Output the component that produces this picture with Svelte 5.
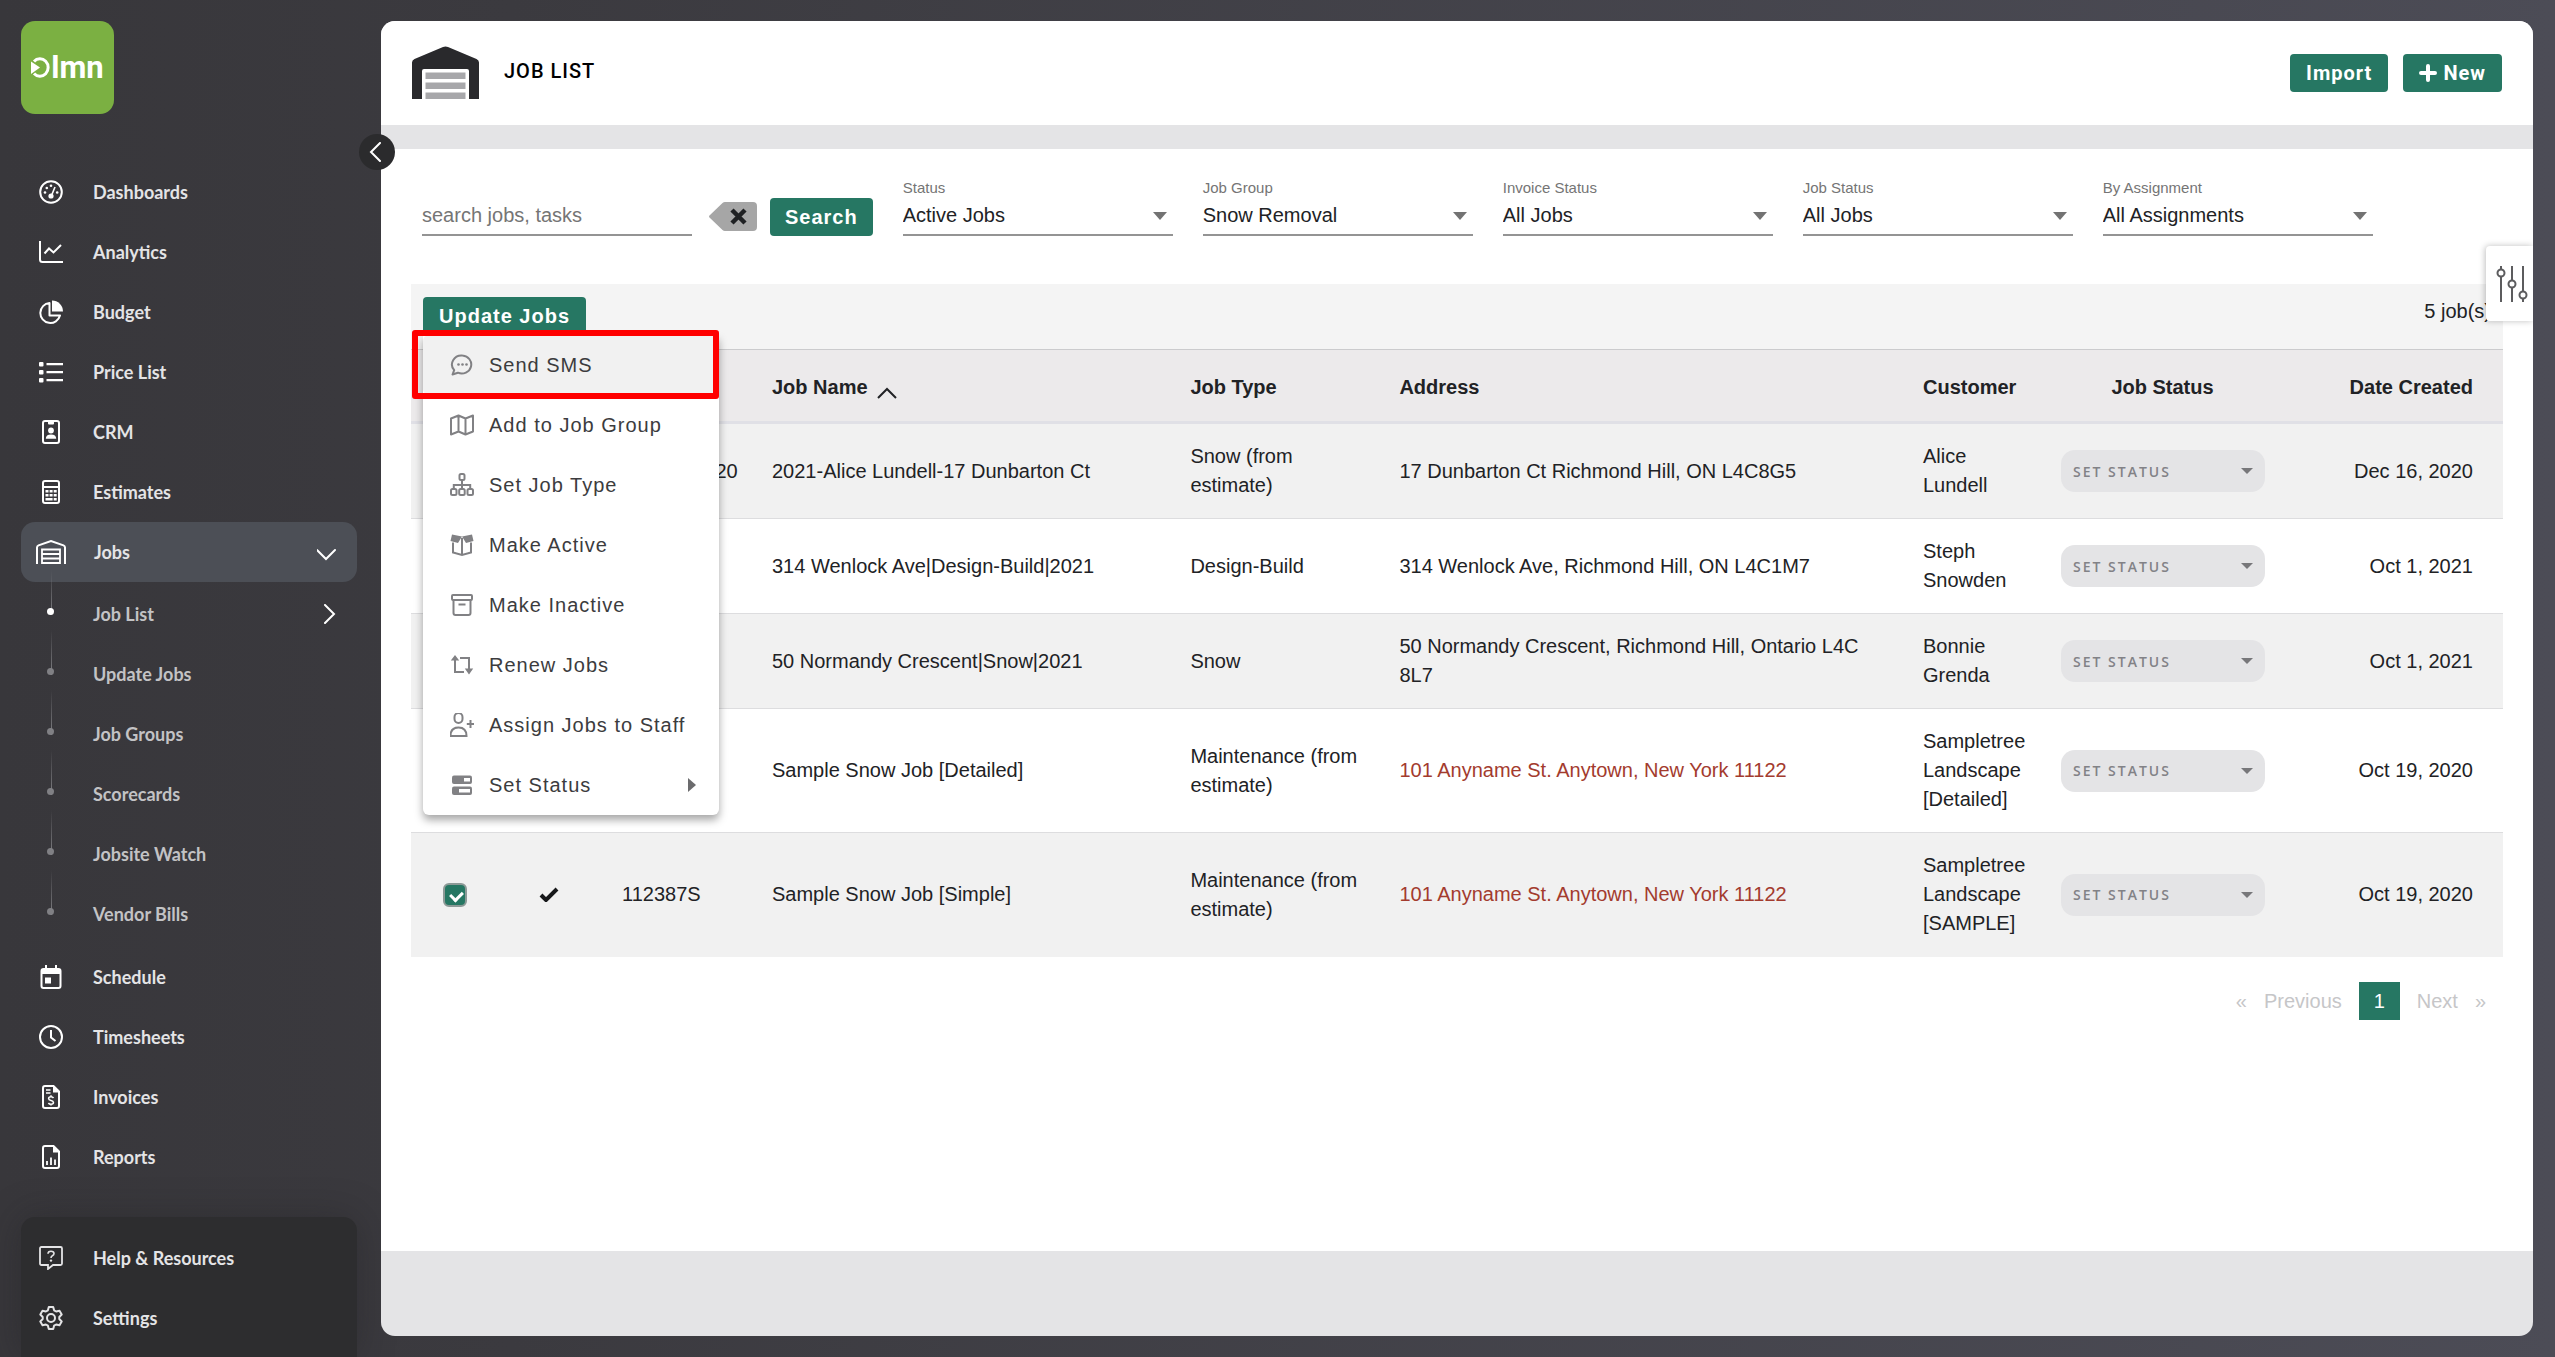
<script>
  const topNav = ['Dashboards', 'Analytics', 'Budget', 'Price List', 'CRM', 'Estimates'];
  const subNav = ['Job List', 'Update Jobs', 'Job Groups', 'Scorecards', 'Jobsite Watch', 'Vendor Bills'];
  const lowerNav = ['Schedule', 'Timesheets', 'Invoices', 'Reports'];
  const helpNav = ['Help & Resources', 'Settings'];
  const filters = [
    { id: 'status', label: 'Status', value: 'Active Jobs' },
    { id: 'group', label: 'Job Group', value: 'Snow Removal' },
    { id: 'invoice', label: 'Invoice Status', value: 'All Jobs' },
    { id: 'jobstatus', label: 'Job Status', value: 'All Jobs' },
    { id: 'assignment', label: 'By Assignment', value: 'All Assignments' }
  ];
  const actions = ['Send SMS', 'Add to Job Group', 'Set Job Type', 'Make Active', 'Make Inactive', 'Renew Jobs', 'Assign Jobs to Staff', 'Set Status'];
  const jobs = [
    { number: 'DEC16-2020', name: '2021-Alice Lundell-17 Dunbarton Ct', type: 'Snow (from estimate)', address: '17 Dunbarton Ct Richmond Hill, ON L4C8G5', customer: 'Alice Lundell', date: 'Dec 16, 2020' },
    { number: '112384S', name: '314 Wenlock Ave|Design-Build|2021', type: 'Design-Build', address: '314 Wenlock Ave, Richmond Hill, ON L4C1M7', customer: 'Steph Snowden', date: 'Oct 1, 2021' },
    { number: '112385S', name: '50 Normandy Crescent|Snow|2021', type: 'Snow', address: '50 Normandy Crescent, Richmond Hill, Ontario L4C 8L7', customer: 'Bonnie Grenda', date: 'Oct 1, 2021' },
    { number: '112386S', name: 'Sample Snow Job [Detailed]', type: 'Maintenance (from estimate)', address: '101 Anyname St. Anytown, New York 11122', customer: 'Sampletree Landscape [Detailed]', date: 'Oct 19, 2020', flagged: true },
    { number: '112387S', name: 'Sample Snow Job [Simple]', type: 'Maintenance (from estimate)', address: '101 Anyname St. Anytown, New York 11122', customer: 'Sampletree Landscape [SAMPLE]', date: 'Oct 19, 2020', flagged: true }
  ];
</script>

{#snippet icon(name)}
  <svg class="icon" viewBox="0 0 24 24" aria-hidden="true">
    {#if name === 'Dashboards'}
      <circle cx="12" cy="12" r="10.8" stroke-width="2" />
      <path d="M12.5 15.5 16 7" stroke-width="1.6" />
      <circle class="fill" cx="12" cy="16" r="2.6" />
      <g class="fill"><circle cx="6" cy="12.5" r="1.3" /><circle cx="7.8" cy="8" r="1.3" /><circle cx="12" cy="5.8" r="1.3" /><circle cx="18.2" cy="12.5" r="1.3" /></g>
    {:else if name === 'Analytics'}
      <path d="M1 1v18.500q0 2.500 2.500 2.500H24" stroke-width="2" />
      <path d="m5.500 13.500 4.500-5 4.500 4 7.500-7.500" stroke-width="2" />
    {:else if name === 'Budget'}
      <path d="M10.500 3A10 10 0 1 0 21 15.500H10.500Z" stroke-width="2" stroke-linejoin="round" />
      <path class="fill" d="M13 .5A11 11 0 0 1 24 11.500H13Z" />
    {:else if name === 'Price List'}
      <g class="fill"><rect x="0" y="2" width="4.500" height="4.500" rx="1" /><rect x="0" y="10" width="4.500" height="4.500" rx="1" /><rect x="0" y="18" width="4.500" height="4.500" rx="1" /></g>
      <path d="M7.500 4.200H24M7.500 12.200H24M7.500 20.200H24" stroke-width="2.200" />
    {:else if name === 'CRM'}
      <rect x="4" y="1" width="16" height="22" rx="2" stroke-width="2" />
      <g class="fill"><rect x="9" y="1" width="6" height="3.500" rx="1" /><circle cx="12" cy="10.500" r="2.900" /><path d="M6.800 18.800q0-4.300 5.200-4.300t5.200 4.300Z" /></g>
    {:else if name === 'Estimates'}
      <rect x="4" y="1" width="16" height="22" rx="2" stroke-width="2" />
      <path d="M4 7h16" stroke-width="2" />
      <path class="fill" d="M6.500 10h3v2.600h-3zM10.600 10h3v2.600h-3zM14.700 10h3v2.600h-3zM6.500 14h3v2.600h-3zM10.600 14h3v2.600h-3zM14.700 14h3v2.600h-3zM6.500 18h7.100v2.400H6.500zM14.700 18h3v2.400h-3z" />
    {:else if name === 'Schedule'}
      <rect x="2.500" y="4" width="19" height="19" rx="2" stroke-width="2" />
      <path class="fill" d="M2 4h20v5H2zM6 0h2v5H6zM16 0h2v5h-2zM6 12.500h6v6H6z" />
    {:else if name === 'Timesheets'}
      <circle cx="12" cy="12" r="11" stroke-width="2" />
      <path d="M12 5v7.500l4.500 3.500" stroke-width="2" />
    {:else if name === 'Invoices'}
      <path d="M14.500 1H6Q4 1 4 3v18q0 2 2 2h12q2 0 2-2V6.500Z" stroke-width="2" />
      <path class="fill" d="M14 1v6.500h6.500Z" />
      <path d="M7 5h4.500M7 8h4.500" stroke-width="1.500" />
      <path d="M14.500 13q-.8-1.300-2.500-1.300-2.400 0-2.400 1.800 0 1.500 2.400 2t2.500 2.100q0 1.700-2.500 1.700-1.800 0-2.600-1.300M12 10.300v1.500M12 19v1.500" stroke-width="1.500" />
    {:else if name === 'Reports'}
      <path d="M14.500 1H6Q4 1 4 3v18q0 2 2 2h12q2 0 2-2V6.500Z" stroke-width="2" />
      <path class="fill" d="M14 1v6.500h6.500Z" />
      <path d="M8 16v4M12 12.500V20M16 14.500V20" stroke-width="1.800" />
    {:else if name === 'Help & Resources'}
      <path d="M2.500 1h19Q23 1 23 2.500v15q0 1.500-1.500 1.500H14l-5 4v-4H2.500Q1 19 1 17.500v-15Q1 1 2.500 1Z" stroke-width="1.800" />
      <path d="M9 7.800q0-2.600 3-2.600t3 2.300q0 1.400-1.600 2.200-1.400.7-1.400 2.200" stroke-width="1.600" />
      <circle class="fill" cx="12" cy="14.600" r="1.200" />
    {:else if name === 'Settings'}
      <circle cx="12" cy="12" r="4" stroke-width="2" />
      <path d="M9.800 1h4.400l.9 3.300 2 1.200 3.400-.8 2.200 3.800-2.400 2.500v2l2.400 2.500-2.200 3.800-3.400-.8-2 1.200-.9 3.300H9.800l-.9-3.300-2-1.200-3.400.8-2.200-3.800L3.700 13v-2L1.300 8.500l2.200-3.800 3.400.8 2-1.200Z" stroke-width="2" stroke-linejoin="round" />
    {:else if name === 'Send SMS'}
      <path d="M12.500 2.500a9.500 9 0 1 1-4.600 17.200L2.500 21.500l1.700-4.300A9.500 9 0 0 1 12.500 2.500Z" stroke-linejoin="round" />
      <g class="fill"><circle cx="8.500" cy="11.500" r="1.300" /><circle cx="12.500" cy="11.500" r="1.300" /><circle cx="16.500" cy="11.500" r="1.300" /></g>
    {:else if name === 'Add to Job Group'}
      <path d="M1 5.500 8.500 2.500l7 3L23 2.500v16l-7.500 3-7-3-7.500 3ZM8.500 2.500v16M15.500 5.500v16" stroke-linejoin="round" />
    {:else if name === 'Set Job Type'}
      <rect x="9.500" y="1" width="5" height="6" rx="1.500" /><rect x="1" y="16" width="5.500" height="6" rx="1.500" /><rect x="9.200" y="16" width="5.500" height="6" rx="1.500" /><rect x="17.500" y="16" width="5.500" height="6" rx="1.500" />
      <path d="M12 7v9M3.800 16v-4h16.400v4" />
    {:else if name === 'Make Active'}
      <path class="fill" d="M2 1.500 12 3.500 8 10 .5 8ZM22 1.500 12 3.500l4 6.500 7.500-2Z" />
      <path d="M3 9.500v10l9 2.500 9-2.500v-10M12 5v17" />
    {:else if name === 'Make Inactive'}
      <rect x="2" y="2" width="20" height="5" rx="1" /><path d="M3.500 7v13q0 2 2 2h13q2 0 2-2V7M8.500 11.500h7" />
    {:else if name === 'Renew Jobs'}
      <path d="M5 6v13h9M10 5h9v12" />
      <path class="fill" d="M5 2 .8 7.500h8.400ZM19 21.500l-4.200-6h8.400Z" />
    {:else if name === 'Assign Jobs to Staff'}
      <rect x="4.500" y="0" width="8" height="10" rx="4" /><path d="M.5 23q0-8.500 8-8.500t8 8.500ZM20.500 7v8M16.800 11h7.400" />
    {:else if name === 'Set Status'}
      <rect class="fill" x="2" y="2.500" width="20" height="8.500" rx="2" /><rect class="fill" x="2" y="13.500" width="20" height="8.500" rx="2" />
      <path class="notch" d="M14 5h6v3.500h-6zM9 16h11v3.500H9z" />
    {/if}
  </svg>
{/snippet}

<div class="shell">
  <aside class="sidebar">
    <a class="logo" href="#home" aria-label="LMN home">
      <svg viewBox="0 0 20 21" aria-hidden="true">
        <path d="M3 4.500A8.200 8.700 0 1 1 3 16.500" />
        <path class="wedge" d="M0 4.500v12.500l9-6.500Z" />
      </svg>
      <span>lmn</span>
    </a>

    <nav class="menu" aria-label="Main">
      {#each topNav as item}
        <a class="nav-item" href="#nav">{@render icon(item)}<span>{item}</span></a>
      {/each}
      <a class="nav-item current" href="#jobs">
        <svg class="icon garage" viewBox="0 0 30 24" aria-hidden="true">
          <path d="M1 24V7.500Q1 6 2.500 5.400L15 1l12.500 4.400Q29 6 29 7.500V24" stroke-width="2" />
          <path d="M6 24V9.500h18V24M6 14h18M6 18.500h18M6 23h18" stroke-width="1.800" />
        </svg>
        <span>Jobs</span>
        <svg class="chev" viewBox="0 0 20 20" aria-hidden="true"><path d="m0 8 9 9 9-9" /></svg>
      </a>
      <div class="sub">
        {#each subNav as item, i}
          <a class="nav-item" class:on={i === 0} href="#sub">
            <span class="rail"></span><span>{item}</span>
            {#if i === 0}<svg class="chev" viewBox="0 0 20 20" aria-hidden="true"><path d="m8 1 9 9-9 9" /></svg>{/if}
          </a>
        {/each}
      </div>
      {#each lowerNav as item}
        <a class="nav-item" href="#nav">{@render icon(item)}<span>{item}</span></a>
      {/each}
    </nav>

    <nav class="help" aria-label="Support">
      {#each helpNav as item}
        <a class="nav-item" href="#help">{@render icon(item)}<span>{item}</span></a>
      {/each}
    </nav>
  </aside>

  <main class="panel">
    <button class="collapse" aria-label="Collapse sidebar">
      <svg viewBox="0 0 20 20" aria-hidden="true"><path d="M13 1 4 10l9 9" /></svg>
    </button>
    <header class="head">
      <div class="title">
        <svg class="head-icon" viewBox="0 0 67 53" aria-hidden="true">
          <path fill="#29292c" d="M0 53V16.500q0-2.500 2.500-3.500L31 1q2.500-1 5 0l28.500 12q2.500 1 2.500 3.500V53H57V25q0-2-2-2H12q-2 0-2 2v28Z" />
          <path fill="#a7a7aa" d="M13.500 26.500h40v6.500h-40zM13.500 36.500h40V43h-40zM13.500 46.500h40V53h-40z" />
        </svg>
        <h1>JOB LIST</h1>
      </div>
      <div class="head-actions">
        <button class="btn alt">Import</button>
        <button class="btn alt"><svg class="plus" viewBox="0 0 18 18" aria-hidden="true"><path d="M9 2v14M2 9h14" /></svg>New</button>
      </div>
    </header>

    <section class="content">
      <form class="filters">
        <input class="search" type="text" placeholder="search jobs, tasks" aria-label="Search jobs, tasks" />
        <button class="clear" type="button" aria-label="Clear search">
          <svg viewBox="0 0 48 29" aria-hidden="true">
            <path fill="#a6a6a6" d="M13.500 1Q14.500 0 16 0h28q4 0 4 4v21q0 4-4 4H16q-1.500 0-2.500-1L1 16q-2-1.500 0-3Z" />
            <path d="m23 8 13 13M36 8 23 21" stroke="#1f2123" stroke-width="4.500" />
          </svg>
        </button>
        <button class="btn" type="button">Search</button>
        {#each filters as f}
          <div class="field">
            <label for={f.id}>{f.label}</label>
            <div class="select">
              <select id={f.id}><option>{f.value}</option></select>
              <svg viewBox="0 0 14 8" aria-hidden="true"><path d="M0 0h14L7 8Z" /></svg>
            </div>
          </div>
        {/each}
      </form>

      <div class="toolbar">
        <div class="dropdown">
          <button class="btn">Update Jobs</button>
          <div class="actions" role="menu">
            {#each actions as a, i}
              <button class="action" class:hover={i === 0} role="menuitem">
                {@render icon(a)}<span>{a}</span>
                {#if a === 'Set Status'}<svg class="more" viewBox="0 0 8 14" aria-hidden="true"><path d="M0 0v14l8-7Z" /></svg>{/if}
              </button>
            {/each}
            <div class="marker"></div>
          </div>
        </div>
        <span class="count">5 job(s)</span>
      </div>

      <table>
        <colgroup>
          <col class="c-check" /><col class="c-active" /><col class="c-number" /><col class="c-name" /><col class="c-type" /><col /><col class="c-customer" /><col class="c-status" /><col class="c-date" />
        </colgroup>
        <thead>
          <tr>
            <th></th><th></th><th></th>
            <th>Job Name<svg class="sort" viewBox="0 0 20 12" aria-hidden="true"><path d="m1 11 9-9 9 9" /></svg></th>
            <th>Job Type</th><th>Address</th><th>Customer</th><th class="mid">Job Status</th><th class="end">Date Created</th>
          </tr>
        </thead>
        <tbody>
          {#each jobs as job}
            <tr>
              <td class="icon-cell"><input type="checkbox" checked aria-label="Select {job.name}" /></td>
              <td class="icon-cell"><svg class="tick" viewBox="0 0 20 15" aria-label="Active"><path d="m2 8 5 5L18 2" /></svg></td>
              <td>{job.number}</td>
              <td>{job.name}</td>
              <td>{job.type}</td>
              <td class:flagged={job.flagged}>{job.address}</td>
              <td>{job.customer}</td>
              <td>
                <div class="pill">
                  <select aria-label="Status of {job.name}"><option>SET STATUS</option></select>
                  <svg viewBox="0 0 12 6" aria-hidden="true"><path d="M0 0h12L6 6Z" /></svg>
                </div>
              </td>
              <td class="end">{job.date}</td>
            </tr>
          {/each}
        </tbody>
      </table>

      <nav class="pages" aria-label="Pagination">
        <a href="#first">«</a><a href="#prev">Previous</a><a class="page" href="#1">1</a><a href="#next">Next</a><a href="#last">»</a>
      </nav>

      <button class="drawer" aria-label="Table options">
        <svg viewBox="0 0 32 36" aria-hidden="true">
          <path d="M5 0v3M5 11v25M16 0v14M16 22v14M27 0v25M27 33v3" />
          <circle cx="5" cy="7" r="3.500" /><circle cx="16" cy="18" r="3.500" /><circle cx="27" cy="29" r="3.500" />
        </svg>
      </button>
    </section>
  </main>
</div>

<style>
  :global(body) { margin: 0; }
  * { box-sizing: border-box; }
  a { color: inherit; text-decoration: none; }
  button, input, select { font: inherit; color: inherit; letter-spacing: inherit; }
  button { border: 0; padding: 0; cursor: pointer; }
  svg { display: block; flex: none; fill: none; stroke: currentColor; }

  .shell {
    display: flex;
    min-height: 100vh;
    padding-right: 22px;
    background: linear-gradient(90deg, #38373b 0%, #3b3a3f 20%, #4c4c56 100%);
    font-family: "Liberation Sans", Arial, sans-serif;
    font-size: 20px;
    line-height: 29px;
    color: #212225;
  }

  .sidebar {
    display: flex;
    flex-direction: column;
    flex: none;
    width: 381px;
    padding: 21px 24px 0 21px;
    font-family: Lato, sans-serif;
    font-size: 18px;
    font-weight: 700;
    color: #e4e4e6;
  }
  .logo {
    display: flex;
    align-items: center;
    justify-content: center;
    width: 93px;
    height: 93px;
    border-radius: 14px;
    background: #7bb042;
    color: #fff;
    font-family: Roboto, sans-serif;
    font-size: 31px;
    line-height: 30px;
  }
  .logo svg { width: 20px; height: 21px; stroke-width: 3; }
  .logo .wedge { fill: #fff; stroke: none; }
  .menu { margin-top: 48px; }
  .nav-item {
    display: flex;
    align-items: center;
    gap: 30px;
    height: 60px;
    padding: 0 20px 0 18px;
    border-radius: 14px;
  }
  .icon { width: 24px; height: 24px; color: #fff; }
  .icon .fill { fill: currentColor; stroke: none; }
  .icon .notch { fill: #fff; stroke: none; }
  .current { gap: 28px; padding-left: 15px; background: #4c4f56; }
  .garage { width: 30px; }
  .chev { width: 20px; height: 20px; margin-left: auto; color: #fff; stroke-width: 2; stroke-linecap: round; }
  .sub { margin: 2px 0 3px; color: #c3c3c5; }
  .rail {
    position: relative;
    align-self: flex-start;
    width: 24px;
    height: 45px;
    margin-top: -14px;
    background: linear-gradient(transparent, #808084) center top / 1px 100% no-repeat;
  }
  .rail::after {
    content: "";
    position: absolute;
    left: 8px;
    bottom: 0;
    width: 7px;
    height: 7px;
    border-radius: 50%;
    background: #808084;
  }
  .on .rail::after { background: #fff; }
  .help {
    margin-top: auto;
    padding: 11px 0 9px;
    border-radius: 14px 14px 0 0;
    background: #2d2d2f;
    box-shadow: 0 0 36px rgba(30, 30, 32, 0.35);
  }
  .help .icon { color: #e4e4e6; }

  .panel {
    position: relative;
    display: flex;
    flex-direction: column;
    flex: 1;
    min-width: 0;
    margin: 21px 0;
    padding-bottom: 85px;
    border-radius: 14px;
    background: #e4e4e6;
  }
  .collapse {
    position: absolute;
    z-index: 2;
    top: 113px;
    left: -22px;
    display: grid;
    place-items: center;
    width: 36px;
    height: 36px;
    border-radius: 50%;
    background: #2b2b2d;
    color: #fff;
  }
  .collapse svg { width: 20px; height: 20px; stroke-width: 2; stroke-linecap: round; }
  .head {
    display: flex;
    align-items: center;
    justify-content: space-between;
    height: 104px;
    padding: 0 31px;
    border-radius: 14px 14px 0 0;
    background: #fff;
  }
  .title { display: flex; gap: 25px; padding-bottom: 2px; }
  .head-icon { width: 67px; height: 53px; stroke: none; }
  h1 {
    margin: 0;
    font-family: Roboto, sans-serif;
    font-size: 20px;
    font-weight: 500;
    letter-spacing: 1px;
    line-height: 50px;
    color: #000;
  }
  .head-actions { display: flex; gap: 15px; }
  .btn {
    display: flex;
    align-items: center;
    height: 38px;
    padding: 0 15px;
    border-radius: 4px;
    background: #267763;
    color: #fff;
    font-weight: 700;
    letter-spacing: 1px;
  }
  .alt { font-family: Roboto, sans-serif; }
  .dropdown .btn, .alt { padding: 0 16px; }
  .plus { width: 18px; height: 18px; margin-right: 6px; stroke-width: 4; stroke-linecap: round; }

  .content {
    position: relative;
    flex: 1;
    margin-top: 24px;
    padding: 25px 30px 0;
    background: #fff;
  }
  .filters { display: flex; align-items: flex-end; gap: 30px; height: 62px; padding-left: 11px; }
  .search {
    width: 270px;
    height: 41px;
    padding: 2px 0 0;
    border: 0;
    border-bottom: 2px solid #949494;
    outline: 0;
    background: none;
  }
  .search::placeholder { color: #757575; opacity: 1; }
  .clear { margin: 0 -17px 5px -13px; background: none; }
  .clear svg { width: 48px; height: 29px; stroke: none; }
  .field { flex: 0 1 270px; }
  .field label { display: block; font-size: 15px; line-height: 19px; color: #757575; }
  .select { display: flex; align-items: center; height: 39px; border-bottom: 2px solid #949494; }
  select { flex: 1; min-width: 0; padding: 0; border: 0; outline: 0; background: none; appearance: none; }
  .select svg { width: 14px; height: 8px; margin: 0 6px 0 -20px; fill: #737373; stroke: none; }

  .toolbar {
    display: flex;
    justify-content: space-between;
    height: 66px;
    margin-top: 48px;
    padding: 13px 12px 0;
    border-bottom: 1px solid #cbcbcd;
    background: #f4f4f4;
  }
  .dropdown { position: relative; }
  .actions {
    position: absolute;
    z-index: 3;
    top: 38px;
    left: 0;
    width: 296px;
    border-radius: 0 0 6px 6px;
    background: #fff;
    box-shadow: 0 5px 9px rgba(0, 0, 0, 0.35);
  }
  .action {
    display: flex;
    align-items: center;
    gap: 15px;
    width: 100%;
    height: 60px;
    padding: 0 23px 0 27px;
    border-radius: 6px;
    background: none;
    color: #3c3c3e;
    letter-spacing: 1px;
    text-align: left;
  }
  .action.hover { background: #f1f1f1; }
  .action .icon { color: #818184; stroke-width: 2; }
  .more { width: 8px; height: 14px; margin-left: auto; fill: #6b6b6d; stroke: none; }
  .marker {
    position: absolute;
    top: -5px;
    left: -11px;
    width: 307px;
    height: 69px;
    border: 6px solid #f00;
    border-radius: 3px;
    pointer-events: none;
  }

  table { width: 100%; table-layout: fixed; border-collapse: separate; border-spacing: 0; }
  .c-check { width: 88px; }
  .c-active { width: 100px; }
  .c-number { width: 150px; }
  .c-name { width: 20%; }
  .c-type { width: 209px; }
  .c-customer { width: 138px; }
  .c-status { width: 238px; }
  .c-date { width: 227px; }
  th {
    height: 74px;
    padding: 3px 8px 0 23px;
    border-bottom: 3px solid #e0e0e6;
    background: #eceaeb;
    font-weight: 700;
    text-align: left;
    white-space: nowrap;
  }
  td { padding: 18px 8px 18px 23px; border-bottom: 1px solid #dddddf; }
  tbody tr:nth-child(odd) { background: #f1f1f1; }
  tbody tr:last-child td { border-bottom-color: #f1f1f1; }
  .mid { padding-right: 12px; text-align: center; }
  .end { padding-right: 30px; text-align: right; }
  .icon-cell { padding: 0; }
  .flagged { color: #a33b2e; }
  .sort { display: inline-block; width: 20px; height: 12px; margin-left: 9px; stroke-width: 2; vertical-align: -5px; }
  .tick { width: 20px; height: 15px; margin: 0 auto; color: #17181a; stroke-width: 4; }
  input[type="checkbox"] {
    position: relative;
    display: block;
    width: 24px;
    height: 24px;
    margin: 0 auto;
    border: 2px solid #8d9a97;
    border-radius: 6px;
    appearance: none;
    background: #267763;
  }
  input[type="checkbox"]::after {
    content: "";
    position: absolute;
    top: 4px;
    left: 7px;
    width: 6px;
    height: 9px;
    border: solid #fff;
    border-width: 0 3px 3px 0;
    transform: rotate(45deg);
  }
  .pill {
    display: flex;
    align-items: center;
    width: 204px;
    height: 42px;
    padding: 0 12px;
    border-radius: 14px;
    background: #e4e4e6;
    color: #828286;
    font-family: "Open Sans", sans-serif;
    font-size: 14px;
    font-weight: 600;
    letter-spacing: 2px;
  }
  .pill svg { width: 12px; height: 6px; margin-left: -12px; fill: #77777a; stroke: none; }

  .pages {
    display: flex;
    align-items: center;
    justify-content: flex-end;
    gap: 17px;
    margin-top: 25px;
    padding-right: 17px;
    color: #c6c6c8;
  }
  .page { width: 41px; height: 38px; line-height: 38px; background: #267763; color: #fff; text-align: center; }

  .drawer {
    position: absolute;
    z-index: 2;
    top: 97px;
    right: 0;
    display: grid;
    place-items: center;
    width: 47px;
    height: 75px;
    padding-left: 4px;
    border-radius: 4px 0 0 4px;
    background: #fff;
    box-shadow: -1px 0 6px rgba(0, 0, 0, 0.25);
    clip-path: inset(-8px 0 -8px -8px);
    color: #5c5c5e;
  }
  .drawer svg { width: 32px; height: 36px; stroke-width: 2; }
</style>
